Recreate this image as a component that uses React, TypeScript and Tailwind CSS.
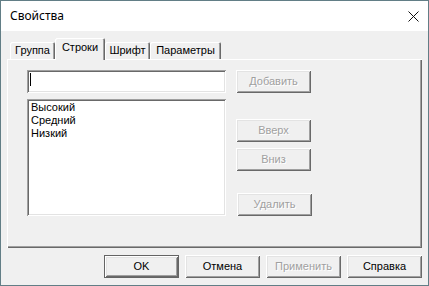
import React from "react";

const raised =
  "shadow-[inset_1px_1px_0_#ffffff,inset_-1px_-1px_0_#696969,inset_2px_2px_0_#e3e3e3,inset_-2px_-2px_0_#a0a0a0]";
const sunken =
  "shadow-[inset_1px_1px_0_#a0a0a0,inset_-1px_-1px_0_#ffffff,inset_2px_2px_0_#696969,inset_-2px_-2px_0_#e3e3e3]";

function Btn({
  label,
  disabled,
  isDefault,
  className = "",
}: {
  label: string;
  disabled?: boolean;
  isDefault?: boolean;
  className?: string;
}) {
  return (
    <div
      className={`w-[75px] h-[23px] flex items-center justify-center bg-[#f0f0f0] ${
        isDefault ? "border border-[#646464]" : ""
      } ${className}`}
    >
      <div className={`w-full h-full flex items-center justify-center ${raised}`}>
        <span
          className={
            disabled
              ? "text-[#a0a0a0] [text-shadow:1px_1px_0_#ffffff]"
              : "text-black"
          }
        >
          {label}
        </span>
      </div>
    </div>
  );
}

function Tab({
  label,
  w,
  selected,
}: {
  label: string;
  w: string;
  selected?: boolean;
}) {
  if (selected) {
    return (
      <div
        className={`${w} h-[22px] -mb-[1px] relative z-10 bg-[#f0f0f0] flex items-center justify-center pb-[3px] rounded-t-[2px] shadow-[inset_1px_1px_0_#ffffff,inset_-1px_0_0_#696969,inset_-2px_0_0_#a0a0a0]`}
      >
        {label}
      </div>
    );
  }
  return (
    <div
      className={`${w} h-[17px] bg-[#f0f0f0] flex items-center justify-center rounded-t-[2px] shadow-[inset_1px_1px_0_#ffffff,inset_-1px_0_0_#696969,inset_-2px_0_0_#a0a0a0]`}
    >
      {label}
    </div>
  );
}

export default function App() {
  return (
    <div className="w-[429px] h-[286px] border border-[#627e86] bg-[#f0f0f0] flex flex-col font-['Liberation_Sans',Arial,sans-serif] text-[11px] leading-[13px] text-black select-none">
      {/* Title bar */}
      <div className="h-[30px] shrink-0 bg-white flex items-center justify-between pl-[9px] pr-[9px]">
        <span className="font-['Noto_Sans',sans-serif] text-[12px] leading-[16px] text-black">
          Свойства
        </span>
        <svg width="11" height="11" viewBox="0 0 11 11" className="block">
          <path d="M0.5 0.5 L10.5 10.5 M10.5 0.5 L0.5 10.5" stroke="#111" strokeWidth="1" />
        </svg>
      </div>

      {/* Body */}
      <div className="flex-1 flex flex-col px-[6px] pt-[7px]">
        {/* Tabs */}
        <div className="h-[21px] flex items-end pl-[3px]">
          <Tab label="Группа" w="w-[45px]" />
          <Tab label="Строки" w="w-[50px]" selected />
          <Tab label="Шрифт" w="w-[45px]" />
          <Tab label="Параметры" w="w-[71px]" />
        </div>

        {/* Panel */}
        <div className="h-[189px] shadow-[inset_1px_1px_0_#ffffff,inset_-1px_-1px_0_#696969,inset_-2px_-2px_0_#a0a0a0] pt-[11px] pl-[20px] flex gap-[10px]">
          <div className="w-[199px] flex flex-col gap-[6px]">
            <div className={`h-[23px] bg-white ${sunken} pt-[3px] pl-[3px]`}>
              <div className="w-[1px] h-[13px] bg-black" />
            </div>
            <div className={`h-[117px] bg-white ${sunken} pt-[2px] pl-[4px] flex flex-col`}>
              <div>Высокий</div>
              <div>Средний</div>
              <div>Низкий</div>
            </div>
          </div>
          <div className="flex flex-col">
            <Btn label="Добавить" disabled />
            <Btn label="Вверх" disabled className="mt-[26px]" />
            <Btn label="Вниз" disabled className="mt-[6px]" />
            <Btn label="Удалить" disabled className="mt-[22px] ml-[1px]" />
          </div>
        </div>

        {/* Bottom buttons */}
        <div className="mt-[7px] flex justify-end gap-[6px]">
          <Btn label="OK" isDefault />
          <Btn label="Отмена" />
          <Btn label="Применить" disabled />
          <Btn label="Справка" />
        </div>
      </div>
    </div>
  );
}
